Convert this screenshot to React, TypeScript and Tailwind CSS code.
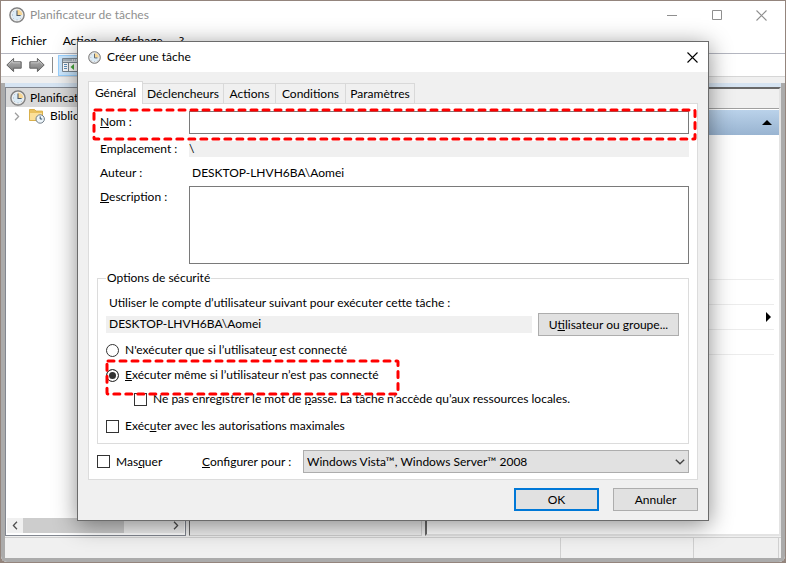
import { type ReactNode, useState } from "react";
import clsx from "clsx";

function ClockIcon({ className }: { className?: string }) {
    return (
        <svg viewBox="0 0 16 16" className={className} aria-hidden="true">
            <circle cx="8" cy="8" r="7.2" fill="#b4b4b4" stroke="#7d7d7d" strokeWidth="1.2" />
            <circle cx="8" cy="8" r="5.7" fill="#dcebf5" stroke="#f2f2f2" />
            <path d="M8 8V2.6A5.4 5.4 0 0 1 13.4 8z" fill="#f8d795" />
            <path
                d="M8 3.4V8.5h3.6"
                fill="none"
                stroke="#4f5a66"
                strokeWidth="1.1"
            />
            <path
                d="M8 12.4v1M3 8h1M4.4 4.4l.6.6M4.4 11.6l.6-.6M11.6 11.6l-.6-.6"
                stroke="#8fa6b8"
                strokeWidth=".8"
            />
        </svg>
    );
}

function ArrowIcon({ flipped }: { flipped?: boolean }) {
    return (
        <svg
            viewBox="0 0 16 16"
            className={clsx("size-4", flipped && "-scale-x-100")}
            aria-hidden="true"
        >
            <defs>
                <linearGradient id="arrow" x1="0" y1="0" x2="0" y2="1">
                    <stop offset="0" stopColor="#b5b5b5" />
                    <stop offset="1" stopColor="#7a7a7a" />
                </linearGradient>
            </defs>
            <path
                d="M.8 8 7.6 1.4v3.4h7.6v6.4H7.6v3.4z"
                fill="url(#arrow)"
                stroke="#646464"
                strokeLinejoin="round"
            />
            <path d="M2.6 7.6 6.7 3.6v2.2h7.4" fill="none" stroke="#d0d0d0" strokeWidth=".8" />
        </svg>
    );
}

function ConsoleIcon() {
    return (
        <svg viewBox="0 0 16 14" className="h-[14px] w-4 shrink-0" aria-hidden="true">
            <path d="M.5.5h15v13H.5z" fill="#fff" stroke="#7b8791" />
            <path d="M1 1h14v2.5H1z" fill="#a8b3bd" />
            <path d="M10 2h1m1 0h1m1 0h1" stroke="#fff" />
            <path d="M1 4.5h14M6.5 4.5v9" stroke="#7b8791" />
            <path d="M2 6.5h3M2 8.5h3M2 10.5h3" stroke="#5d8fbd" />
            <path d="M12 6v6L8.5 9z" fill="#45a83c" />
        </svg>
    );
}

function LibraryIcon() {
    return (
        <svg viewBox="0 0 16 16" className="size-4 shrink-0" aria-hidden="true">
            <path d="M.5 1.5h5L7 3.1h6.5v9.4H.5z" fill="#e9c15f" stroke="#d9b04c" />
            <path d="M1 5h12v7H1z" fill="#fbe09a" />
            <circle cx="11.2" cy="11" r="4.2" fill="#eef6fb" stroke="#6e7b86" />
            <path d="M11.2 8.4V11h2" fill="none" stroke="#2f4e69" />
        </svg>
    );
}

function CloseIcon() {
    return (
        <svg viewBox="0 0 11 11" className="size-[11px]" aria-hidden="true">
            <path d="m.5.5 10 10m0-10-10 10" stroke="currentColor" strokeWidth="1.1" />
        </svg>
    );
}

function Chevron({ className }: { className?: string }) {
    return (
        <svg viewBox="0 0 6 10" className={className} aria-hidden="true">
            <path d="m.8.8 4 4.2-4 4.2" fill="none" stroke="currentColor" strokeWidth="1.4" />
        </svg>
    );
}

function Highlight({ className }: { className?: string }) {
    return (
        <svg
            className={clsx("pointer-events-none absolute z-10 overflow-visible", className)}
            aria-hidden="true"
        >
            <rect
                width="100%"
                height="100%"
                rx="1"
                fill="none"
                stroke="#ff0000"
                strokeWidth="3"
                strokeLinecap="round"
                strokeDasharray="6 6"
            />
        </svg>
    );
}

const boxStyle =
    "size-[13px] shrink-0 appearance-none border border-[#333] bg-white checked:bg-[#333]";

const radioStyle =
    "size-[13px] shrink-0 appearance-none rounded-full border border-[#333] bg-white checked:bg-[#333] checked:shadow-[inset_0_0_0_2px_#fff]";

const buttonStyle = "h-[23px] border border-[#adadad] bg-[#e1e1e1] text-center";

const tabs = [
    { label: "Général", width: "w-[55px]" },
    { label: "Déclencheurs", width: "w-[81px]" },
    { label: "Actions", width: "w-[52px]" },
    { label: "Conditions", width: "w-[70px]" },
    { label: "Paramètres", width: "w-[69px]" },
];

function FieldRow({ children, className }: { children: ReactNode; className?: string }) {
    return <div className={clsx("relative flex", className)}>{children}</div>;
}

function MainWindow() {
    return (
        <div className="flex h-full flex-col overflow-hidden rounded-b-md bg-white">
            <header className="flex h-7 shrink-0 items-center pr-px pl-2 text-[#8f8f8f]">
                <ClockIcon className="size-4" />
                <h1 className="grow pl-[5px]">Planificateur de tâches</h1>
                <div className="flex">
                    <button aria-label="Réduire" className="flex w-[45px] justify-center">
                        <svg viewBox="0 0 10 10" className="size-[10px]">
                            <path d="M0 5.5h10" stroke="currentColor" />
                        </svg>
                    </button>
                    <button aria-label="Agrandir" className="flex w-[45px] justify-center">
                        <svg viewBox="0 0 10 10" className="size-[10px]">
                            <path d="M.5.5h9v9h-9z" fill="none" stroke="currentColor" />
                        </svg>
                    </button>
                    <button aria-label="Fermer" className="flex w-[45px] justify-center">
                        <CloseIcon />
                    </button>
                </div>
            </header>
            <nav className="flex h-[25px] shrink-0 items-center gap-4 border-b border-[#b4b6c0] pl-[10px]">
                <span>Fichier</span>
                <span>Action</span>
                <span>Affichage</span>
                <span>?</span>
            </nav>
            <div className="flex h-[23px] shrink-0 items-center gap-[7px] border-b border-[#d6d6d6] pl-[5px]">
                <ArrowIcon />
                <ArrowIcon flipped />
                <span className="h-4 w-px bg-[#8c8c8c]" />
                <span className="-ml-0.5 flex h-[21px] w-6 items-center justify-center border border-[#99d1ff] bg-[#cce8ff]">
                    <ConsoleIcon />
                </span>
            </div>
            <div className="h-1.5 shrink-0 bg-[#f0f0f0]" />
            <div className="flex grow flex-col border-x-4 border-b-4 border-[#ababab] bg-[#f0f0f0]">
                <div className="h-1 bg-[#d6e4f2]" />
                <div className="flex grow gap-[3px]">
                    <aside className="flex w-[181px] flex-col border border-[#828790] bg-white">
                        <div className="flex h-[19px] items-center gap-1 bg-[#d9d9d9] pl-1">
                            <ClockIcon className="size-4 shrink-0" />
                            <span className="truncate">Planificateur de tâches</span>
                        </div>
                        <div className="flex h-[18px] items-center gap-[5px] pl-2">
                            <Chevron className="mr-1 h-[9px] w-[6px] shrink-0 text-[#a0a0a0]" />
                            <LibraryIcon />
                            <span className="truncate">Bibliothèque</span>
                        </div>
                        <div className="mx-px mt-auto mb-0.5 flex h-[15px] items-center bg-[#f0f0f0] text-[#505050]">
                            <Chevron className="mx-[5px] h-[9px] w-[6px] rotate-180" />
                            <span className="h-full w-[101px] bg-[#cdcdcd]" />
                            <Chevron className="mr-[5px] ml-auto h-[9px] w-[6px]" />
                        </div>
                    </aside>
                    <section className="w-[233px] border border-r-[#d0d0d0] border-b-[#d0d0d0] border-l-[#696969] border-t-[#696969]" />
                    <section className="grow border-2 border-r-[#e3e3e3] border-b-[#e3e3e3] border-l-[#696969] border-t-[#696969] bg-white">
                        <div className="h-5 border-b border-[#a0a0a0] bg-[#f0f0f0]" />
                        <div className="mt-px flex h-[25px] items-center justify-end bg-linear-to-b from-[#bad2ea] to-[#99b4d1] pr-[7px]">
                            <svg viewBox="0 0 10 5" className="h-[5px] w-[10px]" aria-hidden="true">
                                <path d="M5 0 10 5H0z" />
                            </svg>
                        </div>
                        <div className="mr-[5px] h-[145px] border-b border-[#ececec]" />
                        <div className="mr-[5px] h-[25px] border-b border-[#ececec]" />
                        <div className="mr-[5px] flex h-[25px] items-center justify-end border-b border-[#ececec] pr-[3px]">
                            <svg viewBox="0 0 5 10" className="h-[10px] w-[5px]" aria-hidden="true">
                                <path d="M0 0 5 5 0 10z" />
                            </svg>
                        </div>
                        <div className="mr-[5px] h-[25px] border-b border-[#ececec]" />
                    </section>
                </div>
                <footer className="mt-px flex h-[21px] justify-end border-t border-[#d0d0d0] pr-0.5">
                    <span className="w-[133px] border-l border-[#d0d0d0]" />
                    <span className="w-[86px] border-x border-[#d0d0d0]" />
                </footer>
            </div>
        </div>
    );
}

function TaskDialog() {
    const [activeTab, setActiveTab] = useState("Général");

    return (
        <div
            role="dialog"
            aria-labelledby="dialog-title"
            className="absolute inset-x-[77px] top-[41px] border border-[#6b6b6b] bg-[#f0f0f0] shadow-[0_4px_22px_rgba(0,0,0,0.45)]"
        >
            <header className="flex h-[30px] items-center bg-white px-[10px]">
                <ClockIcon className="size-[13px]" />
                <h2 id="dialog-title" className="grow pl-1.5">
                    Créer une tâche
                </h2>
                <button aria-label="Fermer">
                    <CloseIcon />
                </button>
            </header>
            <div className="px-[10px] pt-[9px] pb-[9px]">
                <div role="tablist" className="flex items-end">
                    {tabs.map(({ label, width }) => (
                        <button
                            key={label}
                            role="tab"
                            aria-selected={label === activeTab}
                            onClick={() => setActiveTab(label)}
                            className={clsx(
                                "border-t border-r border-[#d9d9d9] whitespace-nowrap first:border-l",
                                width,
                                label === activeTab
                                    ? "relative -mb-px h-[23px] bg-white pb-px"
                                    : "h-5",
                            )}
                        >
                            {label}
                        </button>
                    ))}
                </div>
                <form className="border border-[#dcdcdc] bg-white px-2 pt-[7px] pb-1.5">
                    <FieldRow>
                        <label htmlFor="name" className="w-[92px] pt-[3px] pl-[3px]">
                            <u>N</u>om :
                        </label>
                        <input
                            id="name"
                            className="h-[23px] grow border border-[#7a7a7a] bg-white px-1 outline-none"
                        />
                        <Highlight className="-top-px -left-[3px] h-[29px] w-[calc(100%+9px)]" />
                    </FieldRow>
                    <FieldRow className="mt-[7px]">
                        <span className="w-[92px] pl-[3px]">Emplacement :</span>
                        <span className="h-4 grow bg-[#f0f0f0]">\</span>
                    </FieldRow>
                    <FieldRow className="mt-2">
                        <span className="w-[92px] pl-[3px]">Auteur :</span>
                        <span className="h-4 pl-[3px]">DESKTOP-LHVH6BA\Aomei</span>
                    </FieldRow>
                    <FieldRow className="mt-[5px]">
                        <label htmlFor="description" className="w-[92px] pt-[3px] pl-[3px]">
                            <u>D</u>escription :
                        </label>
                        <textarea
                            id="description"
                            className="h-[78px] grow resize-none border border-[#7a7a7a] bg-white px-1 outline-none"
                        />
                    </FieldRow>
                    <fieldset className="mt-1.5 border border-[#dcdcdc] pr-[9px] pb-[9px] pl-2">
                        <legend className="px-px">Options de sécurité</legend>
                        <p className="mt-[9px] pl-[3px]">
                            Utiliser le compte d’utilisateur suivant pour exécuter cette tâche :
                        </p>
                        <div className="mt-0.5 flex items-center gap-1.5">
                            <span className="h-[17px] grow bg-[#f0f0f0] pl-[3px]">
                                DESKTOP-LHVH6BA\Aomei
                            </span>
                            <button type="button" className={clsx(buttonStyle, "w-[141px]")}>
                                U<u>t</u>ilisateur ou groupe...
                            </button>
                        </div>
                        <label className="mt-1.5 flex items-center gap-1.5">
                            <input type="radio" name="run" className={radioStyle} />
                            <span>
                                N'exécuter que si l’utilisateu<u>r</u> est connecté
                            </span>
                        </label>
                        <div className="relative mt-[9px]">
                            <label className="flex items-center gap-1.5">
                                <input type="radio" name="run" defaultChecked className={radioStyle} />
                                <span>
                                    <u>E</u>xécuter même si l’utilisateur n’est pas connecté
                                </span>
                            </label>
                            <Highlight className="-top-1.5 left-px h-[33px] w-[291px]" />
                        </div>
                        <label className="mt-2 ml-7 flex items-center gap-1.5">
                            <input type="checkbox" className={boxStyle} />
                            <span>
                                Ne pas enregistrer le mot de <u>p</u>asse. La tâche n’accède qu’aux
                                ressources locales.
                            </span>
                        </label>
                        <label className="mt-[11px] flex items-center gap-1.5">
                            <input type="checkbox" className={boxStyle} />
                            <span>
                                Exéc<u>u</u>ter avec les autorisations maximales
                            </span>
                        </label>
                    </fieldset>
                    <div className="mt-1.5 flex items-center">
                        <label className="flex w-[105px] items-center gap-1.5">
                            <input type="checkbox" className={boxStyle} />
                            <span>
                                Mas<u>q</u>uer
                            </span>
                        </label>
                        <label htmlFor="target" className="w-[101px]">
                            <u>C</u>onfigurer pour :
                        </label>
                        <div className="relative grow">
                            <select
                                id="target"
                                className="block h-[23px] w-full appearance-none border border-[#adadad] bg-[#e1e1e1] px-[3px]"
                            >
                                <option>Windows Vista™, Windows Server™ 2008</option>
                            </select>
                            <Chevron className="pointer-events-none absolute top-[7px] right-1.5 h-[10px] w-[6px] rotate-90 text-[#444]" />
                        </div>
                    </div>
                </form>
                <div className="mt-2 flex justify-end gap-[14px]">
                    <button className="h-[23px] w-[85px] border-2 border-[#0078d7] bg-[#e1e1e1]">
                        OK
                    </button>
                    <button className={clsx(buttonStyle, "w-[85px]")}>Annuler</button>
                </div>
            </div>
        </div>
    );
}

export default function App() {
    return (
        <main className="relative h-screen min-h-[530px] overflow-hidden bg-[#94857d] p-px font-['Lato','Noto_Sans',sans-serif] text-[12px] leading-4 text-black">
            <MainWindow />
            <TaskDialog />
        </main>
    );
}
